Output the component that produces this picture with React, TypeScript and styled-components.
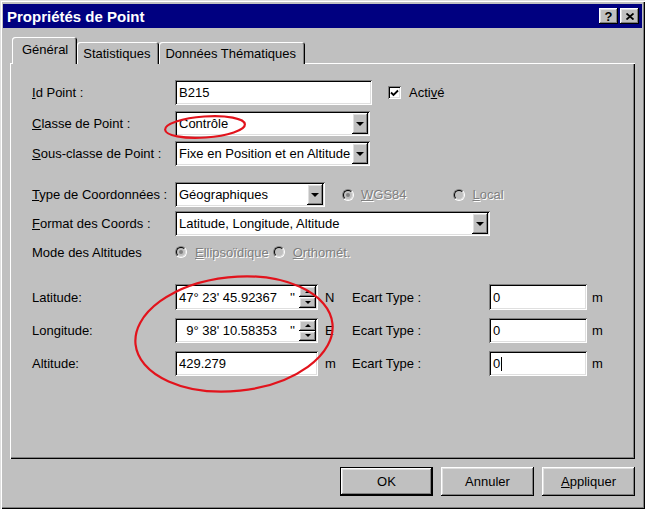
import styled, { createGlobalStyle } from "styled-components";

const GlobalStyle = createGlobalStyle`
  html, body { margin: 0; padding: 0; background: #c0c0c0; }
  * { box-sizing: border-box; }
`;

// ─── bevels ───────────────────────────────────────────────────────────────────
const raised = `inset -1px -1px #000, inset 1px 1px #fff, inset -2px -2px #808080, inset 2px 2px #dfdfdf`;
const sunken = `inset 1px 1px #808080, inset -1px -1px #fff, inset 2px 2px #000, inset -2px -2px #dfdfdf`;

const Window = styled.div`
  position: relative;
  width: 645px;
  height: 509px;
  padding: 4px 3px 0 3px;
  background: #c0c0c0;
  box-shadow: inset 1px 1px #dfdfdf, inset 2px 2px #fff, inset -1px -1px #000, inset -2px -2px #808080;
  display: flex;
  flex-direction: column;
  font-family: "Liberation Sans", Arial, sans-serif;
  font-size: 13px;
  color: #000;
  overflow: hidden;
`;

const TitleBar = styled.div`
  height: 24px;
  flex: none;
  display: flex;
  align-items: center;
  justify-content: space-between;
  padding: 0 3px 0 4px;
  background: #000080;
  color: #fff;
  font-weight: 700;
  font-size: 15px;
`;

const CaptionButtons = styled.div`display: flex; gap: 2px;`;
const CaptionBtn = styled.div`
  width: 19px; height: 16px;
  background: #c0c0c0;
  box-shadow: ${raised};
  color: #000;
  font-size: 13px;
  font-weight: 700;
  display: flex; align-items: center; justify-content: center;
`;

const Body = styled.div`
  flex: none;
  padding: 10px 7px 0 7px;
  display: flex;
  flex-direction: column;
`;

const TabStrip = styled.div`
  display: flex;
  align-items: flex-end;
  height: 26px;
  padding-left: 2px;
  margin-bottom: -1px;
  position: relative;
  z-index: 1;
`;

const Tab = styled.div<{ $active?: boolean }>`
  height: ${p => (p.$active ? 27 : 22)}px;
  padding: ${p => (p.$active ? "0 9px 2px 10px" : "0 9px 0 6px")};
  display: flex;
  align-items: center;
  background: #c0c0c0;
  border-radius: 3px 3px 0 0;
  box-shadow: inset 1px 1px #fff, inset -1px 0 #000, inset -2px 0 #808080;
  white-space: nowrap;
`;

const Panel = styled.div`
  height: 396px;
  padding: 17px 0 0 22px;
  background: #c0c0c0;
  box-shadow: inset 1px 1px #fff, inset -1px -1px #000, inset -2px -2px #808080;
  display: flex;
  flex-direction: column;
`;

const Row = styled.div<{ $mt?: number; $h?: number }>`
  display: flex;
  align-items: center;
  height: ${p => p.$h ?? 25}px;
  margin-top: ${p => p.$mt ?? 0}px;
`;

const Label = styled.span`
  width: 143px;
  flex: none;
  white-space: nowrap;
`;

const Text = styled.span<{ $disabled?: boolean; $ml?: number }>`
  white-space: nowrap;
  margin-left: ${p => p.$ml ?? 0}px;
  color: ${p => (p.$disabled ? "#808080" : "#000")};
  text-shadow: ${p => (p.$disabled ? "1px 1px #fff" : "none")};
`;

const Field = styled.div<{ $w: number }>`
  width: ${p => p.$w}px;
  height: 100%;
  flex: none;
  background: #fff;
  box-shadow: ${sunken};
  display: flex;
  align-items: center;
  padding: 0 2px 0 4px;
  overflow: hidden;
`;

const FieldText = styled.span`
  flex: 1;
  white-space: nowrap;
  overflow: hidden;
`;

const DropBtn = styled.div`
  width: 16px;
  height: calc(100% - 4px);
  flex: none;
  background: #c0c0c0;
  box-shadow: ${raised};
  display: flex;
  align-items: center;
  justify-content: center;
  &::after {
    content: "";
    border-left: 4px solid transparent;
    border-right: 4px solid transparent;
    border-top: 4px solid #000;
  }
`;

const CheckBox = styled.div`
  width: 13px; height: 13px;
  flex: none;
  margin-left: 16px;
  background: #fff;
  box-shadow: ${sunken};
  display: flex; align-items: center; justify-content: center;
`;

const Radio = styled.div<{ $checked?: boolean; $ml?: number }>`
  position: relative;
  width: 12px; height: 12px;
  flex: none;
  margin-left: ${p => p.$ml ?? 0}px;
  border-radius: 50%;
  border: 1px solid;
  border-color: #808080 #fff #fff #808080;
  &::before {
    content: "";
    position: absolute;
    inset: 0;
    border-radius: 50%;
    border: 1px solid;
    border-color: #000 #dfdfdf #dfdfdf #000;
    background: #c0c0c0;
  }
  &::after {
    content: "";
    display: ${p => (p.$checked ? "block" : "none")};
    position: absolute;
    left: 3px; top: 3px;
    width: 4px; height: 4px;
    border-radius: 50%;
    background: #808080;
  }
`;

const CoordGrid = styled.div`
  display: grid;
  grid-template-columns: 143px 143px 34px 137px 98px auto;
  grid-template-rows: 26px 25px 25px;
  row-gap: 8px;
  align-items: center;
  margin-top: 20px;
`;

const Unit = styled.span`padding-left: 7px;`;
const UnitRight = styled.span`padding-left: 5px;`;

const SpinValue = styled.span`
  flex: 1;
  text-align: right;
  white-space: nowrap;
`;
const SecMark = styled.span`width: 22px; text-align: right; padding-right: 4px; flex: none;`;
const Spin = styled.div`
  width: 17px;
  height: calc(100% - 4px);
  flex: none;
  display: flex;
  flex-direction: column;
`;
const SpinHalf = styled.div<{ $up?: boolean }>`
  flex: 1;
  background: #c0c0c0;
  box-shadow: ${raised};
  display: flex; align-items: center; justify-content: center;
  &::after {
    content: "";
    border-left: 3px solid transparent;
    border-right: 3px solid transparent;
    ${p => (p.$up ? "border-bottom: 3px solid #000;" : "border-top: 3px solid #000;")}
  }
`;

const Caret = styled.span`
  display: inline-block;
  width: 1px; height: 14px;
  background: #000;
  vertical-align: middle;
  margin-left: 1px;
`;

const ButtonRow = styled.div`
  display: flex;
  justify-content: flex-end;
  gap: 8px;
  margin-top: 8px;
`;

const Button = styled.div<{ $default?: boolean }>`
  width: 93px;
  height: 29px;
  background: #c0c0c0;
  display: flex; align-items: center; justify-content: center;
  border: ${p => (p.$default ? "1px solid #000" : "none")};
  box-shadow: ${raised};
`;

const Overlay = styled.svg`
  position: absolute;
  left: 0; top: 0;
  pointer-events: none;
`;

const Combo = ({ w, value }: { w: number; value: string }) => (
  <Field $w={w}>
    <FieldText>{value}</FieldText>
    <DropBtn />
  </Field>
);

const SpinField = ({ value }: { value: string }) => (
  <Field $w={143}>
    <SpinValue>{value}</SpinValue>
    <SecMark>''</SecMark>
    <Spin>
      <SpinHalf $up />
      <SpinHalf />
    </Spin>
  </Field>
);

export default function App() {
  return (
    <>
      <GlobalStyle />
      <Window>
        <TitleBar>
          <span>Propriétés de Point</span>
          <CaptionButtons>
            <CaptionBtn>?</CaptionBtn>
            <CaptionBtn>
              <svg width="8" height="7" viewBox="0 0 8 7">
                <path d="M0.5 0.5 L7.5 6.5 M7.5 0.5 L0.5 6.5" stroke="#000" strokeWidth="1.8" />
              </svg>
            </CaptionBtn>
          </CaptionButtons>
        </TitleBar>

        <Body>
          <TabStrip>
            <Tab $active>Général</Tab>
            <Tab>Statistiques</Tab>
            <Tab>Données Thématiques</Tab>
          </TabStrip>

          <Panel>
            <Row>
              <Label><u>I</u>d Point :</Label>
              <Field $w={197}><FieldText>B215</FieldText></Field>
              <CheckBox>
                <svg width="9" height="8" viewBox="0 0 9 8">
                  <path d="M1 3.5 L3.5 6 L8 1.5" stroke="#000" strokeWidth="1.8" fill="none" />
                </svg>
              </CheckBox>
              <Text $ml={8}>Acti<u>v</u>é</Text>
            </Row>
            <Row $mt={6}>
              <Label><u>C</u>lasse de Point :</Label>
              <Combo w={195} value="Contrôle" />
            </Row>
            <Row $mt={5}>
              <Label><u>S</u>ous-classe de Point :</Label>
              <Combo w={195} value="Fixe en Position et en Altitude" />
            </Row>

            <Row $mt={16}>
              <Label><u>T</u>ype de Coordonnées :</Label>
              <Combo w={150} value="Géographiques" />
              <Radio $checked $ml={17} />
              <Text $disabled $ml={7}><u>W</u>GS84</Text>
              <Radio $ml={46} />
              <Text $disabled $ml={8}><u>L</u>ocal</Text>
            </Row>
            <Row $mt={4}>
              <Label><u>F</u>ormat des Coords :</Label>
              <Combo w={315} value="Latitude, Longitude, Altitude" />
            </Row>
            <Row $mt={4} $h={24}>
              <Label>Mode des Altitudes</Label>
              <Radio $checked />
              <Text $disabled $ml={8}><u>E</u>llipsoïdique</Text>
              <Radio $ml={4} />
              <Text $disabled $ml={8}><u>O</u>rthomét.</Text>
            </Row>

            <CoordGrid>
              <Label>Latitude:</Label>
              <SpinField value="47° 23' 45.92367" />
              <Unit>N</Unit>
              <span>Ecart Type :</span>
              <Field $w={98}><FieldText>0</FieldText></Field>
              <UnitRight>m</UnitRight>

              <Label>Longitude:</Label>
              <SpinField value="9° 38' 10.58353" />
              <Unit>E</Unit>
              <span>Ecart Type :</span>
              <Field $w={98}><FieldText>0</FieldText></Field>
              <UnitRight>m</UnitRight>

              <Label>Altitude:</Label>
              <Field $w={143}><FieldText>429.279</FieldText></Field>
              <Unit>m</Unit>
              <span>Ecart Type :</span>
              <Field $w={98}><FieldText>0<Caret /></FieldText></Field>
              <UnitRight>m</UnitRight>
            </CoordGrid>
          </Panel>

          <ButtonRow>
            <Button $default>OK</Button>
            <Button>Annuler</Button>
            <Button><span><u>A</u>ppliquer</span></Button>
          </ButtonRow>
        </Body>

        <Overlay width="645" height="509" viewBox="0 0 645 509">
          <ellipse cx="205" cy="127" rx="40" ry="10.5" transform="rotate(-4 205 127)"
            fill="none" stroke="#e2131c" strokeWidth="2.2" />
          <ellipse cx="234" cy="334" rx="99" ry="57" transform="rotate(-6 234 334)"
            fill="none" stroke="#e2131c" strokeWidth="2.2" />
        </Overlay>
      </Window>
    </>
  );
}
